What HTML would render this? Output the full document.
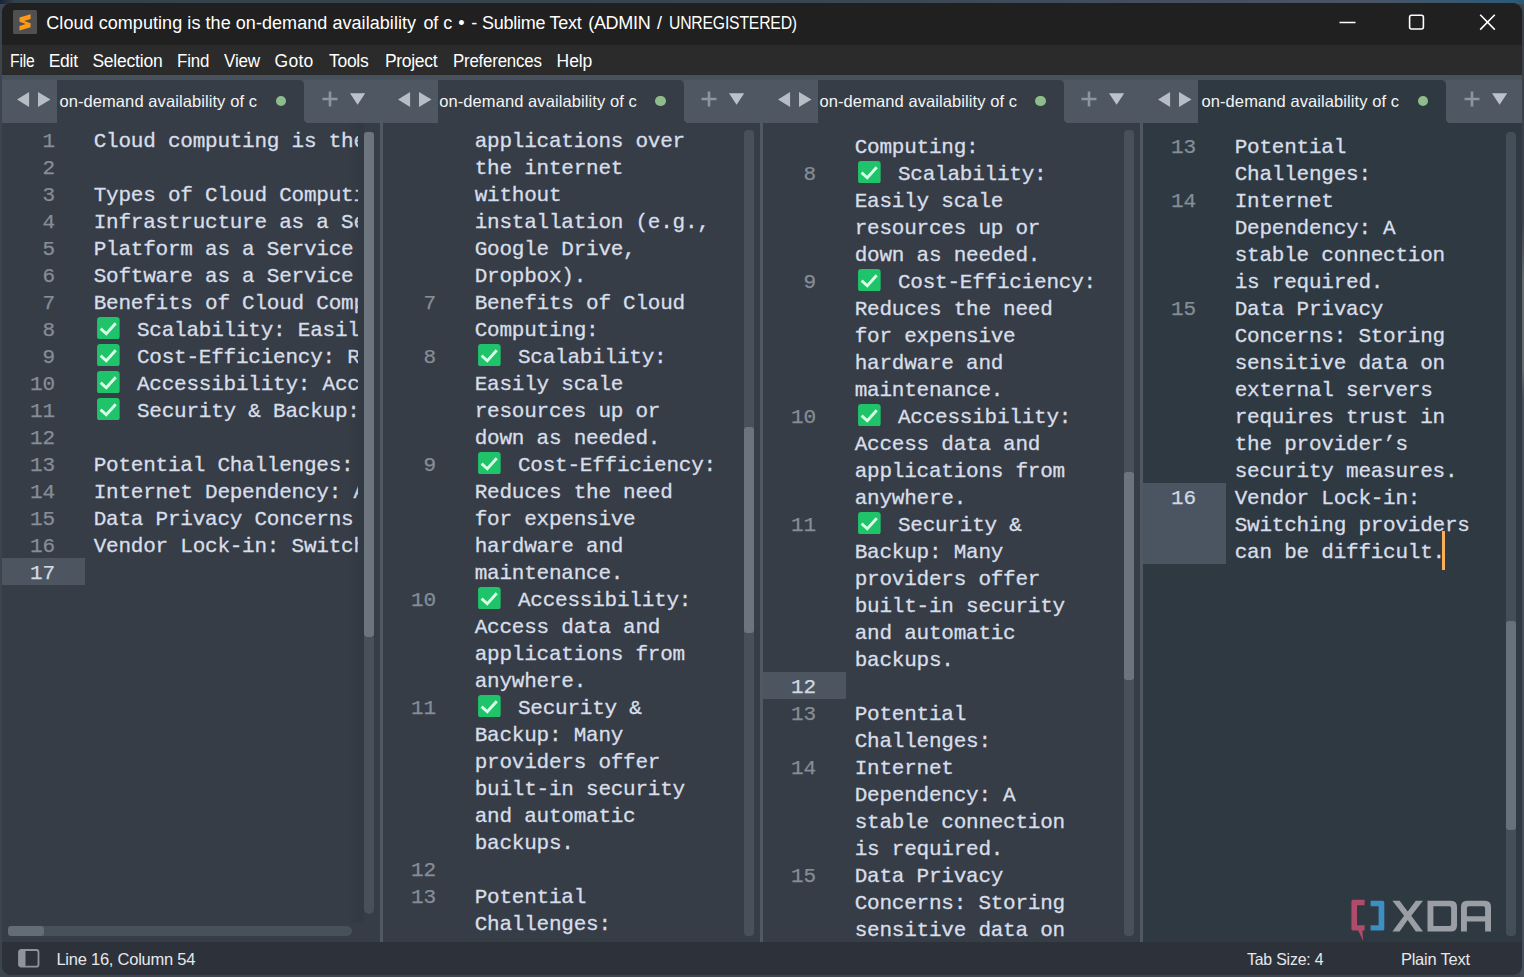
<!DOCTYPE html>
<html><head><meta charset="utf-8"><title>Sublime Text</title>
<style>
html,body{margin:0;padding:0}
body{width:1524px;height:977px;overflow:hidden;background:#3c444d;position:relative;font-family:"Liberation Sans", sans-serif}
#win{position:absolute;left:2px;top:3px;width:1520px;height:972px;border-radius:9px;overflow:hidden;background:#363d46}
#inner{position:absolute;left:-2px;top:-3px;width:1524px;height:977px}
#title{position:absolute;left:0;top:0;width:1524px;height:45px;background:#202020}
#menu{position:absolute;left:0;top:45px;width:1524px;height:30px;background:#2b2b2b}
#tabbar{position:absolute;left:0;top:75px;width:1524px;height:48px;background:linear-gradient(180deg,#47515b 0,#47515b 4px,#4f5862 5.5px,#4f5862 100%)}
#status{position:absolute;left:0;top:942px;width:1524px;height:35px;background:#2d323a}
.u{position:absolute;white-space:pre;font-family:"Liberation Sans", sans-serif}
.pane{position:absolute;top:75px;height:867px;background:#363d46;overflow:hidden}
.pane.act{background:#2f3942}
.pane::before{content:"";position:absolute;left:0;top:0;right:0;height:48px;background:linear-gradient(180deg,#47515b 0,#47515b 4px,#4f5862 5.5px,#4f5862 100%)}
.tabtop{position:absolute;top:0;height:8px;background:#48525c}
.tab{position:absolute;top:5px;height:43px;background:#363d46;border-radius:0 5px 0 0}
.act .tab{background:#2f3942}
.tabcurve{position:absolute;top:44px;width:4px;height:4px;background:radial-gradient(circle at 100% 0,rgba(0,0,0,0) 3.6px,#363d46 4.2px)}
.act .tabcurve{background:radial-gradient(circle at 100% 0,rgba(0,0,0,0) 3.6px,#2f3942 4.2px)}
.nav{position:absolute;left:15px;top:14.6px;width:40px;height:20px}
.dot{position:absolute;top:21px;width:10.4px;height:10.4px;border-radius:50%;background:#8fbc8b}
.plus{position:absolute;top:16px;width:16px;height:16px}
.tri{position:absolute;top:18px;width:15.6px;height:12px}
.ghl{position:absolute;left:0;width:83px;background:#4d5660}
.act .ghl{background:#4a5561}
.ed{position:absolute;left:0;width:379px;font-family:"Liberation Mono", monospace;font-size:21px;line-height:27px;letter-spacing:-0.233px;color:#d8dee9;overflow:hidden}
.r{position:relative;height:27px}
.n{position:absolute;left:0;width:52.8px;text-align:right;color:#868d97;top:2.1px;-webkit-text-stroke:0.25px #868d97}
.n.hn{color:#d3d9e3;-webkit-text-stroke:0.25px #d3d9e3}
.t{position:absolute;left:91.7px;top:2.1px;white-space:pre;-webkit-text-stroke:0.3px #d8dee9}
.ck{position:absolute;left:3.2px;top:-0.4px;width:22.7px;height:22.6px}
.ct{position:absolute;left:43.3px;top:0}
.vtrack{position:absolute;width:10px;border-radius:4px;background:#485059}
.vthumb{position:absolute;width:10px;border-radius:3px;background:#6c757d}
.div{position:absolute;top:123px;height:819px;width:3.2px;background:#505862}
</style></head>
<body>
<div style="position:absolute;left:0;top:0;width:1524px;height:4px;background:linear-gradient(90deg,#1b2238 0,#33414b 1%,#36454f 50%,#495465 90%,#2a5a78 100%)"></div>
<div style="position:absolute;left:1520px;top:12px;width:4px;height:965px;background:linear-gradient(180deg,#39404a 0,#3d444e 22%,#696b72 28%,#696b72 37%,#464e59 40%,#464e59 100%)"></div>
<div id="win"><div id="inner">
<div id="title"></div><div id="menu"></div><div id="tabbar"></div>
<div class="pane" style="left:2px;width:379px">
<div class="tabtop" style="left:55px;width:247.3px"></div>
<div class="tab" style="left:55px;width:247.3px"></div>
<div class="tabcurve" style="left:302.3px"></div>
<svg class="nav" viewBox="0 0 40 20"><path d="M12.1 2 L12.1 16.9 L0 9.45 Z M21 2 L33.5 9.45 L21 16.9 Z" fill="#b7bdc5"/></svg>
<div class="dot" style="left:273.6px"></div>
<svg class="plus" style="left:319.6px" viewBox="0 0 16 16"><path d="M8 0.5 V15.5 M0.5 8 H15.5" stroke="#8d959e" stroke-width="2.6" fill="none"/></svg>
<svg class="tri" style="left:347.5px" viewBox="0 0 16 12"><path d="M0 0 H15.6 L7.8 12 Z" fill="#bcc2ca"/></svg>
<div class="ghl" style="top:483px;height:27px"></div>
<div class="ed" style="top:51px;width:356px">
<div class="r"><span class="n">1</span><span class="t">Cloud computing is the on-demand availability of c</span></div>
<div class="r"><span class="n">2</span><span class="t"></span></div>
<div class="r"><span class="n">3</span><span class="t">Types of Cloud Computing:</span></div>
<div class="r"><span class="n">4</span><span class="t">Infrastructure as a Service (IaaS):</span></div>
<div class="r"><span class="n">5</span><span class="t">Platform as a Service (PaaS):</span></div>
<div class="r"><span class="n">6</span><span class="t">Software as a Service (SaaS):</span></div>
<div class="r"><span class="n">7</span><span class="t">Benefits of Cloud Computing:</span></div>
<div class="r"><span class="n">8</span><span class="t"><svg class="ck" viewBox="0 0 23 23"><rect x="0" y="0" width="23" height="23" rx="3.2" fill="#1fc36a"/><path d="M3.6 11.9 L9.4 17.0 L19.0 6.3" fill="none" stroke="#d9ffe6" stroke-width="2.9"/></svg><span class="ct">Scalability: Easily scale</span></span></div>
<div class="r"><span class="n">9</span><span class="t"><svg class="ck" viewBox="0 0 23 23"><rect x="0" y="0" width="23" height="23" rx="3.2" fill="#1fc36a"/><path d="M3.6 11.9 L9.4 17.0 L19.0 6.3" fill="none" stroke="#d9ffe6" stroke-width="2.9"/></svg><span class="ct">Cost-Efficiency: Reduces</span></span></div>
<div class="r"><span class="n">10</span><span class="t"><svg class="ck" viewBox="0 0 23 23"><rect x="0" y="0" width="23" height="23" rx="3.2" fill="#1fc36a"/><path d="M3.6 11.9 L9.4 17.0 L19.0 6.3" fill="none" stroke="#d9ffe6" stroke-width="2.9"/></svg><span class="ct">Accessibility: Access</span></span></div>
<div class="r"><span class="n">11</span><span class="t"><svg class="ck" viewBox="0 0 23 23"><rect x="0" y="0" width="23" height="23" rx="3.2" fill="#1fc36a"/><path d="M3.6 11.9 L9.4 17.0 L19.0 6.3" fill="none" stroke="#d9ffe6" stroke-width="2.9"/></svg><span class="ct">Security &amp; Backup: Many</span></span></div>
<div class="r"><span class="n">12</span><span class="t"></span></div>
<div class="r"><span class="n">13</span><span class="t">Potential Challenges:</span></div>
<div class="r"><span class="n">14</span><span class="t">Internet Dependency: A stable</span></div>
<div class="r"><span class="n">15</span><span class="t">Data Privacy Concerns: Storing</span></div>
<div class="r"><span class="n">16</span><span class="t">Vendor Lock-in: Switching</span></div>
<div class="r"><span class="n hn">17</span><span class="t"></span></div>
</div>
</div>
<div class="pane" style="left:383px;width:378px">
<div class="tabtop" style="left:55px;width:245.8px"></div>
<div class="tab" style="left:55px;width:245.8px"></div>
<div class="tabcurve" style="left:300.8px"></div>
<svg class="nav" viewBox="0 0 40 20"><path d="M12.1 2 L12.1 16.9 L0 9.45 Z M21 2 L33.5 9.45 L21 16.9 Z" fill="#b7bdc5"/></svg>
<div class="dot" style="left:272.4px"></div>
<svg class="plus" style="left:318.4px" viewBox="0 0 16 16"><path d="M8 0.5 V15.5 M0.5 8 H15.5" stroke="#8d959e" stroke-width="2.6" fill="none"/></svg>
<svg class="tri" style="left:346.3px" viewBox="0 0 16 12"><path d="M0 0 H15.6 L7.8 12 Z" fill="#bcc2ca"/></svg>
<div class="ed" style="top:51px">
<div class="r"><span class="n"></span><span class="t">applications over</span></div>
<div class="r"><span class="n"></span><span class="t">the internet</span></div>
<div class="r"><span class="n"></span><span class="t">without</span></div>
<div class="r"><span class="n"></span><span class="t">installation (e.g.,</span></div>
<div class="r"><span class="n"></span><span class="t">Google Drive,</span></div>
<div class="r"><span class="n"></span><span class="t">Dropbox).</span></div>
<div class="r"><span class="n">7</span><span class="t">Benefits of Cloud</span></div>
<div class="r"><span class="n"></span><span class="t">Computing:</span></div>
<div class="r"><span class="n">8</span><span class="t"><svg class="ck" viewBox="0 0 23 23"><rect x="0" y="0" width="23" height="23" rx="3.2" fill="#1fc36a"/><path d="M3.6 11.9 L9.4 17.0 L19.0 6.3" fill="none" stroke="#d9ffe6" stroke-width="2.9"/></svg><span class="ct">Scalability:</span></span></div>
<div class="r"><span class="n"></span><span class="t">Easily scale</span></div>
<div class="r"><span class="n"></span><span class="t">resources up or</span></div>
<div class="r"><span class="n"></span><span class="t">down as needed.</span></div>
<div class="r"><span class="n">9</span><span class="t"><svg class="ck" viewBox="0 0 23 23"><rect x="0" y="0" width="23" height="23" rx="3.2" fill="#1fc36a"/><path d="M3.6 11.9 L9.4 17.0 L19.0 6.3" fill="none" stroke="#d9ffe6" stroke-width="2.9"/></svg><span class="ct">Cost-Efficiency:</span></span></div>
<div class="r"><span class="n"></span><span class="t">Reduces the need</span></div>
<div class="r"><span class="n"></span><span class="t">for expensive</span></div>
<div class="r"><span class="n"></span><span class="t">hardware and</span></div>
<div class="r"><span class="n"></span><span class="t">maintenance.</span></div>
<div class="r"><span class="n">10</span><span class="t"><svg class="ck" viewBox="0 0 23 23"><rect x="0" y="0" width="23" height="23" rx="3.2" fill="#1fc36a"/><path d="M3.6 11.9 L9.4 17.0 L19.0 6.3" fill="none" stroke="#d9ffe6" stroke-width="2.9"/></svg><span class="ct">Accessibility:</span></span></div>
<div class="r"><span class="n"></span><span class="t">Access data and</span></div>
<div class="r"><span class="n"></span><span class="t">applications from</span></div>
<div class="r"><span class="n"></span><span class="t">anywhere.</span></div>
<div class="r"><span class="n">11</span><span class="t"><svg class="ck" viewBox="0 0 23 23"><rect x="0" y="0" width="23" height="23" rx="3.2" fill="#1fc36a"/><path d="M3.6 11.9 L9.4 17.0 L19.0 6.3" fill="none" stroke="#d9ffe6" stroke-width="2.9"/></svg><span class="ct">Security &amp;</span></span></div>
<div class="r"><span class="n"></span><span class="t">Backup: Many</span></div>
<div class="r"><span class="n"></span><span class="t">providers offer</span></div>
<div class="r"><span class="n"></span><span class="t">built-in security</span></div>
<div class="r"><span class="n"></span><span class="t">and automatic</span></div>
<div class="r"><span class="n"></span><span class="t">backups.</span></div>
<div class="r"><span class="n">12</span><span class="t"></span></div>
<div class="r"><span class="n">13</span><span class="t">Potential</span></div>
<div class="r"><span class="n"></span><span class="t">Challenges:</span></div>
<div class="r"><span class="n">14</span><span class="t">Internet</span></div>
</div>
</div>
<div class="pane" style="left:763px;width:378px">
<div class="tabtop" style="left:55px;width:245.8px"></div>
<div class="tab" style="left:55px;width:245.8px"></div>
<div class="tabcurve" style="left:300.8px"></div>
<svg class="nav" viewBox="0 0 40 20"><path d="M12.1 2 L12.1 16.9 L0 9.45 Z M21 2 L33.5 9.45 L21 16.9 Z" fill="#b7bdc5"/></svg>
<div class="dot" style="left:272.4px"></div>
<svg class="plus" style="left:318.4px" viewBox="0 0 16 16"><path d="M8 0.5 V15.5 M0.5 8 H15.5" stroke="#8d959e" stroke-width="2.6" fill="none"/></svg>
<svg class="tri" style="left:346.3px" viewBox="0 0 16 12"><path d="M0 0 H15.6 L7.8 12 Z" fill="#bcc2ca"/></svg>
<div class="ghl" style="top:597px;height:27px"></div>
<div class="ed" style="top:57px">
<div class="r"><span class="n"></span><span class="t">Computing:</span></div>
<div class="r"><span class="n">8</span><span class="t"><svg class="ck" viewBox="0 0 23 23"><rect x="0" y="0" width="23" height="23" rx="3.2" fill="#1fc36a"/><path d="M3.6 11.9 L9.4 17.0 L19.0 6.3" fill="none" stroke="#d9ffe6" stroke-width="2.9"/></svg><span class="ct">Scalability:</span></span></div>
<div class="r"><span class="n"></span><span class="t">Easily scale</span></div>
<div class="r"><span class="n"></span><span class="t">resources up or</span></div>
<div class="r"><span class="n"></span><span class="t">down as needed.</span></div>
<div class="r"><span class="n">9</span><span class="t"><svg class="ck" viewBox="0 0 23 23"><rect x="0" y="0" width="23" height="23" rx="3.2" fill="#1fc36a"/><path d="M3.6 11.9 L9.4 17.0 L19.0 6.3" fill="none" stroke="#d9ffe6" stroke-width="2.9"/></svg><span class="ct">Cost-Efficiency:</span></span></div>
<div class="r"><span class="n"></span><span class="t">Reduces the need</span></div>
<div class="r"><span class="n"></span><span class="t">for expensive</span></div>
<div class="r"><span class="n"></span><span class="t">hardware and</span></div>
<div class="r"><span class="n"></span><span class="t">maintenance.</span></div>
<div class="r"><span class="n">10</span><span class="t"><svg class="ck" viewBox="0 0 23 23"><rect x="0" y="0" width="23" height="23" rx="3.2" fill="#1fc36a"/><path d="M3.6 11.9 L9.4 17.0 L19.0 6.3" fill="none" stroke="#d9ffe6" stroke-width="2.9"/></svg><span class="ct">Accessibility:</span></span></div>
<div class="r"><span class="n"></span><span class="t">Access data and</span></div>
<div class="r"><span class="n"></span><span class="t">applications from</span></div>
<div class="r"><span class="n"></span><span class="t">anywhere.</span></div>
<div class="r"><span class="n">11</span><span class="t"><svg class="ck" viewBox="0 0 23 23"><rect x="0" y="0" width="23" height="23" rx="3.2" fill="#1fc36a"/><path d="M3.6 11.9 L9.4 17.0 L19.0 6.3" fill="none" stroke="#d9ffe6" stroke-width="2.9"/></svg><span class="ct">Security &amp;</span></span></div>
<div class="r"><span class="n"></span><span class="t">Backup: Many</span></div>
<div class="r"><span class="n"></span><span class="t">providers offer</span></div>
<div class="r"><span class="n"></span><span class="t">built-in security</span></div>
<div class="r"><span class="n"></span><span class="t">and automatic</span></div>
<div class="r"><span class="n"></span><span class="t">backups.</span></div>
<div class="r"><span class="n hn">12</span><span class="t"></span></div>
<div class="r"><span class="n">13</span><span class="t">Potential</span></div>
<div class="r"><span class="n"></span><span class="t">Challenges:</span></div>
<div class="r"><span class="n">14</span><span class="t">Internet</span></div>
<div class="r"><span class="n"></span><span class="t">Dependency: A</span></div>
<div class="r"><span class="n"></span><span class="t">stable connection</span></div>
<div class="r"><span class="n"></span><span class="t">is required.</span></div>
<div class="r"><span class="n">15</span><span class="t">Data Privacy</span></div>
<div class="r"><span class="n"></span><span class="t">Concerns: Storing</span></div>
<div class="r"><span class="n"></span><span class="t">sensitive data on</span></div>
<div class="r"><span class="n"></span><span class="t">external servers</span></div>
</div>
</div>
<div class="pane act" style="left:1143px;width:379px">
<div class="tabtop" style="left:55px;width:247.9px"></div>
<div class="tab" style="left:55px;width:247.9px"></div>
<div class="tabcurve" style="left:302.9px"></div>
<svg class="nav" viewBox="0 0 40 20"><path d="M12.1 2 L12.1 16.9 L0 9.45 Z M21 2 L33.5 9.45 L21 16.9 Z" fill="#b7bdc5"/></svg>
<div class="dot" style="left:274.7px"></div>
<svg class="plus" style="left:320.6px" viewBox="0 0 16 16"><path d="M8 0.5 V15.5 M0.5 8 H15.5" stroke="#8d959e" stroke-width="2.6" fill="none"/></svg>
<svg class="tri" style="left:348.8px" viewBox="0 0 16 12"><path d="M0 0 H15.6 L7.8 12 Z" fill="#bcc2ca"/></svg>
<div class="ghl" style="top:408px;height:81px"></div>
<div class="ed" style="top:57px">
<div class="r"><span class="n">13</span><span class="t">Potential</span></div>
<div class="r"><span class="n"></span><span class="t">Challenges:</span></div>
<div class="r"><span class="n">14</span><span class="t">Internet</span></div>
<div class="r"><span class="n"></span><span class="t">Dependency: A</span></div>
<div class="r"><span class="n"></span><span class="t">stable connection</span></div>
<div class="r"><span class="n"></span><span class="t">is required.</span></div>
<div class="r"><span class="n">15</span><span class="t">Data Privacy</span></div>
<div class="r"><span class="n"></span><span class="t">Concerns: Storing</span></div>
<div class="r"><span class="n"></span><span class="t">sensitive data on</span></div>
<div class="r"><span class="n"></span><span class="t">external servers</span></div>
<div class="r"><span class="n"></span><span class="t">requires trust in</span></div>
<div class="r"><span class="n"></span><span class="t">the provider’s</span></div>
<div class="r"><span class="n"></span><span class="t">security measures.</span></div>
<div class="r"><span class="n hn">16</span><span class="t">Vendor Lock-in:</span></div>
<div class="r"><span class="n"></span><span class="t">Switching providers</span></div>
<div class="r"><span class="n"></span><span class="t">can be difficult.</span></div>
</div>
</div>
<div id="status"></div>
<div class="vthumb" style="left:364.2px;top:132px;height:505px"></div>
<div class="vtrack" style="left:364.2px;top:637px;height:277px;border-radius:0 0 5px 5px"></div>
<div class="vtrack" style="left:744px;top:130px;height:806px"></div><div class="vthumb" style="left:744px;top:426.5px;height:206.5px"></div>
<div class="vtrack" style="left:1124px;top:130px;height:806px"></div><div class="vthumb" style="left:1124px;top:472px;height:208px"></div>
<div class="vtrack" style="left:1506px;top:132px;height:804px;background:#444e59"></div><div class="vthumb" style="left:1506px;top:621px;height:209px;background:#67717c"></div>
<div style="position:absolute;left:346px;top:123px;width:18px;height:800px;background:linear-gradient(90deg,rgba(0,0,0,0) 0,rgba(0,0,0,0.06) 66%,rgba(0,0,0,0.06) 100%)"></div>
<div class="vtrack" style="left:8px;top:926px;width:344px;height:10px;border-radius:5px"></div><div class="vthumb" style="left:8px;top:926px;width:36px;height:10px;background:#646c75"></div>
<div class="div" style="left:380.1px"></div>
<div class="div" style="left:759.9px"></div>
<div class="div" style="left:1139.9px"></div>
<div style="position:absolute;left:1442px;top:531px;width:2.6px;height:39px;background:#f9ae58"></div>
<svg style="position:absolute;left:13px;top:10px;width:24px;height:24px" viewBox="0 0 24 24"><rect width="24" height="24" rx="1.5" fill="#505050"/><path d="M6.5 7.6 L17.6 4.3 V8.9 L11.2 10.9 L17.6 13.2 V17.3 L6.5 20.6 V16.1 L12.8 14.1 L6.5 11.8 Z" fill="#ff9a17"/></svg>
<svg style="position:absolute;left:1330px;top:8px;width:180px;height:30px" viewBox="0 0 180 30"><path d="M9.5 14.6 H25.5" stroke="#fff" stroke-width="1.5" fill="none"/><rect x="79.6" y="7.2" width="13.8" height="13.8" rx="2" fill="none" stroke="#fff" stroke-width="1.6"/><path d="M150.2 6.8 L164.8 21.6 M164.8 6.8 L150.2 21.6" stroke="#fff" stroke-width="1.6" fill="none"/></svg>
<svg style="position:absolute;left:18px;top:949px;width:22px;height:19px" viewBox="0 0 22 19"><rect x="1" y="1" width="19.5" height="16.6" rx="2.2" fill="none" stroke="#8f959d" stroke-width="1.8"/><rect x="1" y="1" width="6.5" height="16.6" rx="1.5" fill="#8f959d"/></svg>
<svg style="position:absolute;left:1350px;top:898px;width:144px;height:46px" viewBox="0 0 144 46">
<path d="M1.4 3.5 Q1.4 1.8 3.1 1.8 H14.6 V7.2 H7 V27.2 H14.6 V32.6 H12.4 L13.2 43 L8.2 32.6 H3.1 Q1.4 32.6 1.4 30.9 Z" fill="#b04b6c"/>
<path d="M20.6 2.8 H32.6 Q34.3 2.8 34.3 4.5 V30.9 Q34.3 32.6 32.6 32.6 H20.6 V27.2 H28.6 V8.2 H20.6 Z" fill="#3c8fc3"/>
<g fill="#9b9ea4"><path d="M42.4 2.8 H49.6 L57.7 13.6 L65.8 2.8 H73 L61.3 17.7 L73 33.6 H65.8 L57.7 21.9 L49.6 33.6 H42.4 L54.1 17.7 Z"/>
<path fill-rule="evenodd" d="M77.5 2.8 H101 Q107 2.8 107 8.8 V27.6 Q107 33.6 101 33.6 H77.5 Z M83.4 8.3 V28.1 H99.2 Q101.1 28.1 101.1 26.2 V10.2 Q101.1 8.3 99.2 8.3 Z"/>
<path fill-rule="evenodd" d="M111 33.6 V8.8 Q111 2.8 117 2.8 H135 Q141 2.8 141 8.8 V33.6 H135.1 V23.6 H116.9 V33.6 Z M116.9 18.2 H135.1 V10.2 Q135.1 8.3 133.2 8.3 H118.8 Q116.9 8.3 116.9 10.2 Z"/></g></svg>
<span class="u" style="left:46.3px;top:13.7px;font-size:18px;line-height:18px;letter-spacing:0.059px;color:#ffffff">Cloud computing is the on-demand availability</span>
<span class="u" style="left:423.4px;top:13.7px;font-size:18px;line-height:18px;letter-spacing:-0.039px;color:#ffffff">of c</span>
<span class="u" style="left:458.2px;top:13.7px;font-size:18px;line-height:18px;letter-spacing:0.000px;color:#ffffff">•</span>
<span class="u" style="left:471.3px;top:13.7px;font-size:18px;line-height:18px;letter-spacing:0.000px;color:#ffffff">-</span>
<span class="u" style="left:482.1px;top:13.7px;font-size:18px;line-height:18px;letter-spacing:-0.274px;color:#ffffff">Sublime Text</span>
<span class="u" style="left:588.2px;top:13.7px;font-size:18px;line-height:18px;letter-spacing:-0.300px;color:#ffffff">(ADMIN</span>
<span class="u" style="left:657.0px;top:13.7px;font-size:18px;line-height:18px;letter-spacing:0.000px;color:#ffffff">/</span>
<span class="u" style="left:668.6px;top:13.7px;font-size:18px;line-height:18px;letter-spacing:-0.200px;color:#ffffff;transform:scaleX(0.8737);transform-origin:0 0">UNREGISTERED)</span>
<span class="u" style="left:9.9px;top:52.6px;font-size:17.5px;line-height:17.5px;letter-spacing:-0.200px;color:#ffffff;transform:scaleX(0.8948);transform-origin:0 0">File</span>
<span class="u" style="left:48.7px;top:52.6px;font-size:17.5px;line-height:17.5px;letter-spacing:-0.252px;color:#ffffff">Edit</span>
<span class="u" style="left:92.4px;top:52.6px;font-size:17.5px;line-height:17.5px;letter-spacing:-0.213px;color:#ffffff">Selection</span>
<span class="u" style="left:177.0px;top:52.6px;font-size:17.5px;line-height:17.5px;letter-spacing:-0.200px;color:#ffffff;transform:scaleX(0.9657);transform-origin:0 0">Find</span>
<span class="u" style="left:224.3px;top:52.6px;font-size:17.5px;line-height:17.5px;letter-spacing:-0.200px;color:#ffffff;transform:scaleX(0.9750);transform-origin:0 0">View</span>
<span class="u" style="left:274.6px;top:52.6px;font-size:17.5px;line-height:17.5px;letter-spacing:0.249px;color:#ffffff">Goto</span>
<span class="u" style="left:329.0px;top:52.6px;font-size:17.5px;line-height:17.5px;letter-spacing:-0.290px;color:#ffffff">Tools</span>
<span class="u" style="left:385.0px;top:52.6px;font-size:17.5px;line-height:17.5px;letter-spacing:-0.328px;color:#ffffff">Project</span>
<span class="u" style="left:452.7px;top:52.6px;font-size:17.5px;line-height:17.5px;letter-spacing:-0.200px;color:#ffffff;transform:scaleX(0.9615);transform-origin:0 0">Preferences</span>
<span class="u" style="left:556.6px;top:52.6px;font-size:17.5px;line-height:17.5px;letter-spacing:-0.100px;color:#ffffff">Help</span>
<span class="u" style="left:56.4px;top:950.6px;font-size:16.5px;line-height:16.5px;letter-spacing:-0.236px;color:#e6e8eb">Line 16, Column 54</span>
<span class="u" style="left:1246.8px;top:950.6px;font-size:16.5px;line-height:16.5px;letter-spacing:-0.200px;color:#e6e8eb;transform:scaleX(0.9606);transform-origin:0 0">Tab Size: 4</span>
<span class="u" style="left:1400.9px;top:950.6px;font-size:16.5px;line-height:16.5px;letter-spacing:-0.239px;color:#e6e8eb">Plain Text</span>
<span class="u" style="left:59.4px;top:92.5px;font-size:16.5px;line-height:16.5px;letter-spacing:0.086px;color:#f4f4f4">on-demand availability of c</span>
<span class="u" style="left:439.2px;top:92.5px;font-size:16.5px;line-height:16.5px;letter-spacing:0.086px;color:#f4f4f4">on-demand availability of c</span>
<span class="u" style="left:819.5px;top:92.5px;font-size:16.5px;line-height:16.5px;letter-spacing:0.086px;color:#f4f4f4">on-demand availability of c</span>
<span class="u" style="left:1201.5px;top:92.5px;font-size:16.5px;line-height:16.5px;letter-spacing:0.086px;color:#f4f4f4">on-demand availability of c</span>
</div></div>
</body></html>
